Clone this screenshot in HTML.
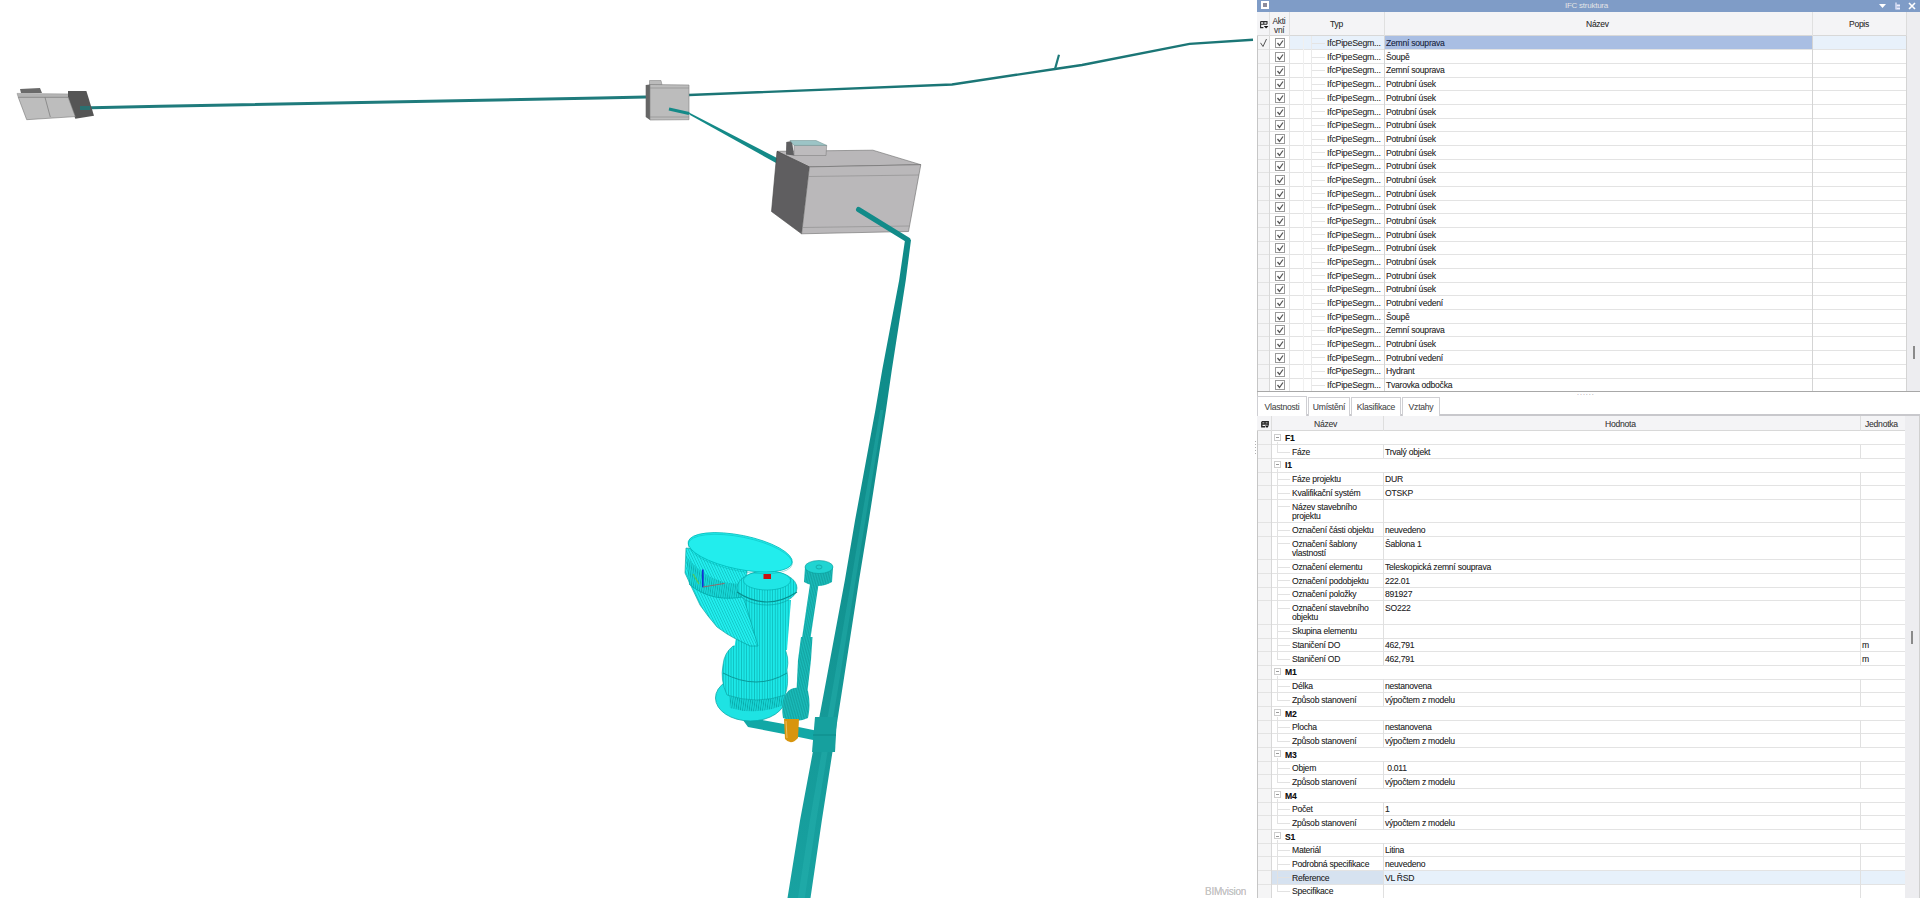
<!DOCTYPE html><html><head><meta charset="utf-8"><style>
*{margin:0;padding:0;box-sizing:border-box}
html,body{width:1920px;height:898px;overflow:hidden;background:#fff;font-family:"Liberation Sans",sans-serif;font-size:8.6px;letter-spacing:-0.25px;color:#2a2a2a}
.ab{position:absolute}
.t{position:absolute;white-space:nowrap;line-height:10px;text-shadow:0 0 .4px rgba(0,0,0,.3)}
.hl{position:absolute;height:1px;background:#e3e3e3}
.vl{position:absolute;width:1px;background:#e3e3e3}
.cb{position:absolute;width:10px;height:10px;border:1px solid #9a9a9a;background:#fff}
.cb svg{position:absolute;left:0;top:0}
</style></head><body>

<svg class="ab" style="left:0;top:0" width="1257" height="898" viewBox="0 0 1257 898">

<!-- long top pipe -->
<polyline points="80,108 160,106.3 600,98 646,97" fill="none" stroke="#1f7b7c" stroke-width="3"/>
<polyline points="689,95 952,84.5 1055,69 1082,65 1189.5,43.9 1253,39.7" fill="none" stroke="#1b7676" stroke-width="2.4"/>
<line x1="1055" y1="69" x2="1059" y2="54.7" stroke="#1d7a7a" stroke-width="2.2"/>
<!-- left box -->
<polygon points="20,89 40,88 42,93 21,93" fill="#6a6a6a"/>
<polygon points="17,93.4 68.6,93.9 68.6,97.4 18.3,97.4" fill="#b4b4b4" stroke="#8a8a8a" stroke-width=".5"/>
<polygon points="68,91 86.4,91 94,115.7 75.3,118.8 68,97" fill="#555"/>
<polygon points="18.3,97.4 68.2,97.4 75.3,116.6 26.7,119.7" fill="#bdbdbd" stroke="#777" stroke-width=".6"/>
<line x1="45" y1="97.4" x2="50.3" y2="117" stroke="#777" stroke-width=".7"/>
<line x1="80" y1="108" x2="90" y2="108" stroke="#2a7070" stroke-width="4"/>
<!-- small box -->
<polygon points="649.5,80.5 661,80.5 662,85 649.5,85" fill="#bbb" stroke="#777" stroke-width=".5"/>
<polygon points="645.7,85 650,84.5 650,120 645.7,117" fill="#666"/>
<polygon points="650,84.5 689,85 689,119.7 650,120" fill="#bcbcbc" stroke="#808080" stroke-width=".6"/>
<line x1="650" y1="88" x2="689" y2="88" stroke="#888" stroke-width=".6"/>
<line x1="650" y1="117" x2="689" y2="117" stroke="#888" stroke-width=".6"/>
<!-- diagonal pipe small box -> big box -->
<polyline points="669,109 689,113.5" fill="none" stroke="#148a88" stroke-width="3"/><polygon points="688,112 690,115 777,163.5 778,158.5" fill="#148a88"/>
<!-- big box -->
<polygon points="777,151.3 872.9,150.2 920.8,164.7 809.4,166.9" fill="#b9b7b9" stroke="#6a6a6a" stroke-width=".6"/>
<polygon points="777,151.3 809.4,166.9 801.6,233.8 771.5,211.5" fill="#5f5e60" stroke="#444" stroke-width=".6"/>
<polygon points="809.4,166.9 920.8,164.7 908.5,231.5 801.6,233.8" fill="#bab8ba" stroke="#6a6a6a" stroke-width=".6"/>
<line x1="808" y1="176.5" x2="919" y2="175" stroke="#8a8a8a" stroke-width=".6"/>
<line x1="802" y1="227.5" x2="909.5" y2="226" stroke="#8a8a8a" stroke-width=".6"/>
<polygon points="786.3,142 792,141 794,155.5 786,154.5" fill="#5e5e60"/>
<polygon points="794,145.4 826.7,145.4 826,155.5 794,155.5" fill="#bdbbbd" stroke="#777" stroke-width=".5"/>
<polygon points="790,140.5 816,140.5 826.7,145.4 794,145.4" fill="#9cc4c6" stroke="#6a8a8a" stroke-width=".5"/>
<!-- pipe in big box then down -->
<polyline points="858.5,209.5 908,240" fill="none" stroke="#128b89" stroke-width="5" stroke-linecap="round"/>
<defs><linearGradient id="pg" x1="0" y1="240" x2="0" y2="898" gradientUnits="userSpaceOnUse"><stop offset="0" stop-color="#0f8a88"/><stop offset=".45" stop-color="#11908e"/><stop offset="1" stop-color="#18a2a1"/></linearGradient></defs>
<polygon points="905.0,240 899.2,280 882.2,370 875.4,410 855.1,520 844.9,580 826.3,680 800.1,820 787.5,898 810.5,898 821.9,820 843.7,680 859.1,580 868.9,520 886.0,410 891.8,370 905.8,280 911.0,240" fill="url(#pg)"/>
<polygon points="880.2,410 861.3,520 851.3,580 834.1,680 809.9,820 797.9,898 804.8,898 816.4,820 839.4,680 855.6,580 865.4,520 883.4,410" fill="#2ab6b5" opacity=".35"/>


<defs>
<pattern id="vs" width="2.6" height="10" patternUnits="userSpaceOnUse"><rect width="2.6" height="10" fill="#1ce8e8"/><rect width="0.6" height="10" fill="#08aaaa"/></pattern>
<pattern id="vs2" width="2.2" height="10" patternUnits="userSpaceOnUse" patternTransform="rotate(8)"><rect width="2.2" height="10" fill="#16d4d4"/><rect width="0.6" height="10" fill="#079f9f"/></pattern>
<pattern id="vs3" width="2.4" height="10" patternUnits="userSpaceOnUse" patternTransform="rotate(-25)"><rect width="2.4" height="10" fill="#22eeee"/><rect width="0.5" height="10" fill="#09b0b0"/></pattern>
<pattern id="ps" width="1.6" height="10" patternUnits="userSpaceOnUse" patternTransform="rotate(10)"><rect width="1.6" height="10" fill="#1abcba"/><rect width="0.5" height="10" fill="#0e9896"/></pattern>
</defs>
<g>
<!-- connector -->
<polygon points="740,716 784,724 818,731 818,741 784,734 748,727" fill="#12a8a6"/>
<!-- coupling on main pipe -->
<polygon points="815,717 837,717 835,752 812,752" fill="#16a09e"/>
<line x1="813" y1="735" x2="836" y2="735" stroke="#0d8a88" stroke-width="1"/>
<!-- bottom disk -->
<ellipse cx="750.5" cy="698" rx="35" ry="23" fill="#1ee3e3" stroke="#0aa8a8" stroke-width=".8"/>
<!-- lower band -->
<path d="M728,684 L785,686 L784,705 Q757,716 730,708 Z" fill="url(#vs2)"/>
<!-- bulge -->
<path d="M733,646 L783,646 Q790,656 787,670 Q789,685 785,695 Q757,705 727,695 Q720,680 723,665 Q724,653 733,646 Z" fill="url(#vs)" stroke="#08a0a0" stroke-width=".6"/>
<path d="M723,673 Q757,691 787,673" fill="none" stroke="#0a9a9a" stroke-width="1"/>
<!-- column -->
<path d="M742,600 L791,600 L787,650 Q760,657 734,650 Z" fill="url(#vs)"/>
<!-- funnel -->
<path d="M686,548 L685,573 L691,586 L700,605 L708,616 L717,627 L727,634 L734,638 L750,646 L758,646 L745,602 L748,556 Z" fill="url(#vs3)" stroke="#099" stroke-width=".6"/>
<path d="M686,556 Q712,588 748,583 L748,596 Q712,604 689,584 Z" fill="url(#vs2)" opacity=".85"/>
<path d="M689,584 Q712,604 748,596" fill="none" stroke="#0aa" stroke-width=".8"/>
<!-- top ring -->
<ellipse cx="767" cy="588" rx="30" ry="17" fill="url(#vs)" stroke="#08a0a0" stroke-width=".6"/>
<ellipse cx="767" cy="580.5" rx="23.5" ry="9.5" fill="#20e6e6" stroke="#0aa" stroke-width=".6"/>
<path d="M737,592 Q767,612 797,592" fill="none" stroke="#078f8f" stroke-width="1.2"/>
<!-- lid -->
<ellipse cx="740.2" cy="552.3" rx="53" ry="17" transform="rotate(11.4 740.2 552.3)" fill="#22eded" stroke="#0bb" stroke-width=".8"/>
<ellipse cx="740.2" cy="554" rx="53" ry="17" transform="rotate(11.4 740.2 554)" fill="none" stroke="#0aa" stroke-width=".6" opacity=".6"/>
<rect x="763.5" y="574" width="7.5" height="5" fill="#c81010"/>
<line x1="702.8" y1="569.5" x2="702.8" y2="587.3" stroke="#1030d8" stroke-width="1.7"/>
<line x1="693" y1="574" x2="699" y2="584" stroke="#5c5" stroke-width="1.2"/>
<line x1="703" y1="587" x2="724.6" y2="583.4" stroke="#a06060" stroke-width=".9"/>
<!-- small pipe -->
<polygon points="810,584 818.6,584 810.5,638 802,638" fill="url(#ps)"/>
<path d="M801,637 L812.5,637 L811,660 L807.5,691 L796.5,691 L798,660 Z" fill="url(#ps)"/>
<path d="M794,688 Q803,686 808,691 Q811,705 808,718 Q796,724 783,718 Q781,705 784,697 Q788,689 794,688 Z" fill="url(#ps)"/>
<path d="M805,567 L833,567 L832,582 Q818,590 804,582 Z" fill="url(#ps)"/>
<ellipse cx="819" cy="567" rx="14" ry="6.5" fill="#20d4d2" stroke="#0a9a98" stroke-width=".6"/>
<ellipse cx="819" cy="567" rx="3" ry="2" fill="none" stroke="#0a8a88" stroke-width=".5"/>
<!-- orange nozzle -->
<path d="M784,719 L799,719 L798,738 Q791,746 785,739 Z" fill="#d8950e"/>
<path d="M786,721 L787,738" stroke="#f0c060" stroke-width="1"/>
</g>

</svg>
<div class="t" style="left:1205px;top:887px;color:#c8c8c8;font-size:10px">BIMvision</div>
<div class="ab" style="left:1257px;top:0;width:663px;height:898px;background:#fff;border-left:1px solid #c6c6c6"></div>
<div class="ab" style="left:1257px;top:0;width:663px;height:12px;background:#7f9cc7"></div>
<div class="ab" style="left:1261px;top:1px;width:8px;height:8px;background:#fff"><div class="ab" style="left:2px;top:2px;width:4px;height:4px;background:#8c8c9c"></div></div>
<div class="t" style="left:1565px;top:0px;color:#eef2f8;font-size:8px;line-height:11px">IFC struktura</div>
<svg class="ab" style="left:1879px;top:2px" width="40" height="9"><polygon points="0,2 7,2 3.5,6" fill="#fff"/><path d="M17,0.5 v7" stroke="#eef" stroke-width="1.2" fill="none"/><rect x="17.5" y="2.5" width="3.5" height="2" fill="#eef"/><rect x="17.5" y="5.5" width="3.5" height="2" fill="#eef"/><path d="M30,1 l6,6 M36,1 l-6,6" stroke="#fff" stroke-width="1.6"/></svg>
<div class="ab" style="left:1257px;top:12px;width:650px;height:24px;background:#f4f4f6;border-bottom:1px solid #d8d8d8"></div>
<div class="vl" style="left:1269px;top:12px;height:24px;background:#e0e0e0"></div>
<div class="vl" style="left:1289px;top:12px;height:24px;background:#e0e0e0"></div>
<div class="vl" style="left:1384px;top:12px;height:24px;background:#e0e0e0"></div>
<div class="vl" style="left:1812px;top:12px;height:24px;background:#e0e0e0"></div>
<div class="vl" style="left:1906px;top:12px;height:24px;background:#e0e0e0"></div>
<div class="t" style="left:1272.5px;top:15.5px;color:#444;font-size:8.3px">Akti</div><div class="t" style="left:1274px;top:25px;color:#444;font-size:8.3px">vní</div>
<div class="t" style="left:1330px;top:19px;color:#333;font-size:8.5px">Typ</div>
<div class="t" style="left:1586px;top:19px;color:#333;font-size:8.5px">Název</div>
<div class="t" style="left:1849px;top:19px;color:#333;font-size:8.5px">Popis</div>
<svg class="ab" style="left:1260px;top:21px" width="9" height="8"><path d="M0.6,0.6h6.4v2.7 M0.6,0.6v6h2.8 M0.6,3.2h6.4 M3.8,0.6v2.6" stroke="#2a2a2a" fill="none" stroke-width="1.1"/><polygon points="3.8,5 8.4,5 6.1,7.6" fill="#111"/></svg>
<div class="ab" style="left:1906px;top:12px;width:14px;height:380px;background:#ededf0;border-left:1px solid #dcdcdc"></div>
<div class="ab" style="left:1913px;top:346px;width:2px;height:13px;background:#8a8a8a"></div>
<div class="ab" style="left:1258px;top:36px;width:11px;height:356px;background:#f5f5f6"></div>
<div class="ab" style="left:1289px;top:36.0px;width:95px;height:13.68px;background:#e8f1fb"></div>
<div class="ab" style="left:1384px;top:36.0px;width:428px;height:13.68px;background:#a9bee3"></div>
<div class="ab" style="left:1812px;top:36.0px;width:94px;height:13.68px;background:#e8f1fb"></div>
<div class="hl" style="left:1258px;top:49.18px;width:648px"></div>
<div class="cb" style="left:1275px;top:38.20px"><svg width="8" height="8"><path d="M1.5,4 L3.5,6.5 L7,1.5" stroke="#555" stroke-width="1.3" fill="none"/></svg></div>
<div class="hl" style="left:1312px;top:42.84px;width:13px;background:#e4e4e4"></div>
<div class="t" style="left:1327px;top:38.10px;font-size:8.8px;color:#303030">IfcPipeSegm...</div>
<div class="t" style="left:1386px;top:38.10px;color:#1c2a48">Zemní souprava</div>
<div class="hl" style="left:1258px;top:62.86px;width:648px"></div>
<div class="cb" style="left:1275px;top:51.88px"><svg width="8" height="8"><path d="M1.5,4 L3.5,6.5 L7,1.5" stroke="#555" stroke-width="1.3" fill="none"/></svg></div>
<div class="hl" style="left:1312px;top:56.52px;width:13px;background:#e4e4e4"></div>
<div class="t" style="left:1327px;top:51.78px;font-size:8.8px;color:#303030">IfcPipeSegm...</div>
<div class="t" style="left:1386px;top:51.78px;color:#2c2c2c">Šoupě</div>
<div class="hl" style="left:1258px;top:76.54px;width:648px"></div>
<div class="cb" style="left:1275px;top:65.56px"><svg width="8" height="8"><path d="M1.5,4 L3.5,6.5 L7,1.5" stroke="#555" stroke-width="1.3" fill="none"/></svg></div>
<div class="hl" style="left:1312px;top:70.20px;width:13px;background:#e4e4e4"></div>
<div class="t" style="left:1327px;top:65.46px;font-size:8.8px;color:#303030">IfcPipeSegm...</div>
<div class="t" style="left:1386px;top:65.46px;color:#2c2c2c">Zemní souprava</div>
<div class="hl" style="left:1258px;top:90.22px;width:648px"></div>
<div class="cb" style="left:1275px;top:79.24px"><svg width="8" height="8"><path d="M1.5,4 L3.5,6.5 L7,1.5" stroke="#555" stroke-width="1.3" fill="none"/></svg></div>
<div class="hl" style="left:1312px;top:83.88px;width:13px;background:#e4e4e4"></div>
<div class="t" style="left:1327px;top:79.14px;font-size:8.8px;color:#303030">IfcPipeSegm...</div>
<div class="t" style="left:1386px;top:79.14px;color:#2c2c2c">Potrubní úsek</div>
<div class="hl" style="left:1258px;top:103.90px;width:648px"></div>
<div class="cb" style="left:1275px;top:92.92px"><svg width="8" height="8"><path d="M1.5,4 L3.5,6.5 L7,1.5" stroke="#555" stroke-width="1.3" fill="none"/></svg></div>
<div class="hl" style="left:1312px;top:97.56px;width:13px;background:#e4e4e4"></div>
<div class="t" style="left:1327px;top:92.82px;font-size:8.8px;color:#303030">IfcPipeSegm...</div>
<div class="t" style="left:1386px;top:92.82px;color:#2c2c2c">Potrubní úsek</div>
<div class="hl" style="left:1258px;top:117.58px;width:648px"></div>
<div class="cb" style="left:1275px;top:106.60px"><svg width="8" height="8"><path d="M1.5,4 L3.5,6.5 L7,1.5" stroke="#555" stroke-width="1.3" fill="none"/></svg></div>
<div class="hl" style="left:1312px;top:111.24px;width:13px;background:#e4e4e4"></div>
<div class="t" style="left:1327px;top:106.50px;font-size:8.8px;color:#303030">IfcPipeSegm...</div>
<div class="t" style="left:1386px;top:106.50px;color:#2c2c2c">Potrubní úsek</div>
<div class="hl" style="left:1258px;top:131.26px;width:648px"></div>
<div class="cb" style="left:1275px;top:120.28px"><svg width="8" height="8"><path d="M1.5,4 L3.5,6.5 L7,1.5" stroke="#555" stroke-width="1.3" fill="none"/></svg></div>
<div class="hl" style="left:1312px;top:124.92px;width:13px;background:#e4e4e4"></div>
<div class="t" style="left:1327px;top:120.18px;font-size:8.8px;color:#303030">IfcPipeSegm...</div>
<div class="t" style="left:1386px;top:120.18px;color:#2c2c2c">Potrubní úsek</div>
<div class="hl" style="left:1258px;top:144.94px;width:648px"></div>
<div class="cb" style="left:1275px;top:133.96px"><svg width="8" height="8"><path d="M1.5,4 L3.5,6.5 L7,1.5" stroke="#555" stroke-width="1.3" fill="none"/></svg></div>
<div class="hl" style="left:1312px;top:138.60px;width:13px;background:#e4e4e4"></div>
<div class="t" style="left:1327px;top:133.86px;font-size:8.8px;color:#303030">IfcPipeSegm...</div>
<div class="t" style="left:1386px;top:133.86px;color:#2c2c2c">Potrubní úsek</div>
<div class="hl" style="left:1258px;top:158.62px;width:648px"></div>
<div class="cb" style="left:1275px;top:147.64px"><svg width="8" height="8"><path d="M1.5,4 L3.5,6.5 L7,1.5" stroke="#555" stroke-width="1.3" fill="none"/></svg></div>
<div class="hl" style="left:1312px;top:152.28px;width:13px;background:#e4e4e4"></div>
<div class="t" style="left:1327px;top:147.54px;font-size:8.8px;color:#303030">IfcPipeSegm...</div>
<div class="t" style="left:1386px;top:147.54px;color:#2c2c2c">Potrubní úsek</div>
<div class="hl" style="left:1258px;top:172.30px;width:648px"></div>
<div class="cb" style="left:1275px;top:161.32px"><svg width="8" height="8"><path d="M1.5,4 L3.5,6.5 L7,1.5" stroke="#555" stroke-width="1.3" fill="none"/></svg></div>
<div class="hl" style="left:1312px;top:165.96px;width:13px;background:#e4e4e4"></div>
<div class="t" style="left:1327px;top:161.22px;font-size:8.8px;color:#303030">IfcPipeSegm...</div>
<div class="t" style="left:1386px;top:161.22px;color:#2c2c2c">Potrubní úsek</div>
<div class="hl" style="left:1258px;top:185.98px;width:648px"></div>
<div class="cb" style="left:1275px;top:175.00px"><svg width="8" height="8"><path d="M1.5,4 L3.5,6.5 L7,1.5" stroke="#555" stroke-width="1.3" fill="none"/></svg></div>
<div class="hl" style="left:1312px;top:179.64px;width:13px;background:#e4e4e4"></div>
<div class="t" style="left:1327px;top:174.90px;font-size:8.8px;color:#303030">IfcPipeSegm...</div>
<div class="t" style="left:1386px;top:174.90px;color:#2c2c2c">Potrubní úsek</div>
<div class="hl" style="left:1258px;top:199.66px;width:648px"></div>
<div class="cb" style="left:1275px;top:188.68px"><svg width="8" height="8"><path d="M1.5,4 L3.5,6.5 L7,1.5" stroke="#555" stroke-width="1.3" fill="none"/></svg></div>
<div class="hl" style="left:1312px;top:193.32px;width:13px;background:#e4e4e4"></div>
<div class="t" style="left:1327px;top:188.58px;font-size:8.8px;color:#303030">IfcPipeSegm...</div>
<div class="t" style="left:1386px;top:188.58px;color:#2c2c2c">Potrubní úsek</div>
<div class="hl" style="left:1258px;top:213.34px;width:648px"></div>
<div class="cb" style="left:1275px;top:202.36px"><svg width="8" height="8"><path d="M1.5,4 L3.5,6.5 L7,1.5" stroke="#555" stroke-width="1.3" fill="none"/></svg></div>
<div class="hl" style="left:1312px;top:207.00px;width:13px;background:#e4e4e4"></div>
<div class="t" style="left:1327px;top:202.26px;font-size:8.8px;color:#303030">IfcPipeSegm...</div>
<div class="t" style="left:1386px;top:202.26px;color:#2c2c2c">Potrubní úsek</div>
<div class="hl" style="left:1258px;top:227.02px;width:648px"></div>
<div class="cb" style="left:1275px;top:216.04px"><svg width="8" height="8"><path d="M1.5,4 L3.5,6.5 L7,1.5" stroke="#555" stroke-width="1.3" fill="none"/></svg></div>
<div class="hl" style="left:1312px;top:220.68px;width:13px;background:#e4e4e4"></div>
<div class="t" style="left:1327px;top:215.94px;font-size:8.8px;color:#303030">IfcPipeSegm...</div>
<div class="t" style="left:1386px;top:215.94px;color:#2c2c2c">Potrubní úsek</div>
<div class="hl" style="left:1258px;top:240.70px;width:648px"></div>
<div class="cb" style="left:1275px;top:229.72px"><svg width="8" height="8"><path d="M1.5,4 L3.5,6.5 L7,1.5" stroke="#555" stroke-width="1.3" fill="none"/></svg></div>
<div class="hl" style="left:1312px;top:234.36px;width:13px;background:#e4e4e4"></div>
<div class="t" style="left:1327px;top:229.62px;font-size:8.8px;color:#303030">IfcPipeSegm...</div>
<div class="t" style="left:1386px;top:229.62px;color:#2c2c2c">Potrubní úsek</div>
<div class="hl" style="left:1258px;top:254.38px;width:648px"></div>
<div class="cb" style="left:1275px;top:243.40px"><svg width="8" height="8"><path d="M1.5,4 L3.5,6.5 L7,1.5" stroke="#555" stroke-width="1.3" fill="none"/></svg></div>
<div class="hl" style="left:1312px;top:248.04px;width:13px;background:#e4e4e4"></div>
<div class="t" style="left:1327px;top:243.30px;font-size:8.8px;color:#303030">IfcPipeSegm...</div>
<div class="t" style="left:1386px;top:243.30px;color:#2c2c2c">Potrubní úsek</div>
<div class="hl" style="left:1258px;top:268.06px;width:648px"></div>
<div class="cb" style="left:1275px;top:257.08px"><svg width="8" height="8"><path d="M1.5,4 L3.5,6.5 L7,1.5" stroke="#555" stroke-width="1.3" fill="none"/></svg></div>
<div class="hl" style="left:1312px;top:261.72px;width:13px;background:#e4e4e4"></div>
<div class="t" style="left:1327px;top:256.98px;font-size:8.8px;color:#303030">IfcPipeSegm...</div>
<div class="t" style="left:1386px;top:256.98px;color:#2c2c2c">Potrubní úsek</div>
<div class="hl" style="left:1258px;top:281.74px;width:648px"></div>
<div class="cb" style="left:1275px;top:270.76px"><svg width="8" height="8"><path d="M1.5,4 L3.5,6.5 L7,1.5" stroke="#555" stroke-width="1.3" fill="none"/></svg></div>
<div class="hl" style="left:1312px;top:275.40px;width:13px;background:#e4e4e4"></div>
<div class="t" style="left:1327px;top:270.66px;font-size:8.8px;color:#303030">IfcPipeSegm...</div>
<div class="t" style="left:1386px;top:270.66px;color:#2c2c2c">Potrubní úsek</div>
<div class="hl" style="left:1258px;top:295.42px;width:648px"></div>
<div class="cb" style="left:1275px;top:284.44px"><svg width="8" height="8"><path d="M1.5,4 L3.5,6.5 L7,1.5" stroke="#555" stroke-width="1.3" fill="none"/></svg></div>
<div class="hl" style="left:1312px;top:289.08px;width:13px;background:#e4e4e4"></div>
<div class="t" style="left:1327px;top:284.34px;font-size:8.8px;color:#303030">IfcPipeSegm...</div>
<div class="t" style="left:1386px;top:284.34px;color:#2c2c2c">Potrubní úsek</div>
<div class="hl" style="left:1258px;top:309.10px;width:648px"></div>
<div class="cb" style="left:1275px;top:298.12px"><svg width="8" height="8"><path d="M1.5,4 L3.5,6.5 L7,1.5" stroke="#555" stroke-width="1.3" fill="none"/></svg></div>
<div class="hl" style="left:1312px;top:302.76px;width:13px;background:#e4e4e4"></div>
<div class="t" style="left:1327px;top:298.02px;font-size:8.8px;color:#303030">IfcPipeSegm...</div>
<div class="t" style="left:1386px;top:298.02px;color:#2c2c2c">Potrubní vedení</div>
<div class="hl" style="left:1258px;top:322.78px;width:648px"></div>
<div class="cb" style="left:1275px;top:311.80px"><svg width="8" height="8"><path d="M1.5,4 L3.5,6.5 L7,1.5" stroke="#555" stroke-width="1.3" fill="none"/></svg></div>
<div class="hl" style="left:1312px;top:316.44px;width:13px;background:#e4e4e4"></div>
<div class="t" style="left:1327px;top:311.70px;font-size:8.8px;color:#303030">IfcPipeSegm...</div>
<div class="t" style="left:1386px;top:311.70px;color:#2c2c2c">Šoupě</div>
<div class="hl" style="left:1258px;top:336.46px;width:648px"></div>
<div class="cb" style="left:1275px;top:325.48px"><svg width="8" height="8"><path d="M1.5,4 L3.5,6.5 L7,1.5" stroke="#555" stroke-width="1.3" fill="none"/></svg></div>
<div class="hl" style="left:1312px;top:330.12px;width:13px;background:#e4e4e4"></div>
<div class="t" style="left:1327px;top:325.38px;font-size:8.8px;color:#303030">IfcPipeSegm...</div>
<div class="t" style="left:1386px;top:325.38px;color:#2c2c2c">Zemní souprava</div>
<div class="hl" style="left:1258px;top:350.14px;width:648px"></div>
<div class="cb" style="left:1275px;top:339.16px"><svg width="8" height="8"><path d="M1.5,4 L3.5,6.5 L7,1.5" stroke="#555" stroke-width="1.3" fill="none"/></svg></div>
<div class="hl" style="left:1312px;top:343.80px;width:13px;background:#e4e4e4"></div>
<div class="t" style="left:1327px;top:339.06px;font-size:8.8px;color:#303030">IfcPipeSegm...</div>
<div class="t" style="left:1386px;top:339.06px;color:#2c2c2c">Potrubní úsek</div>
<div class="hl" style="left:1258px;top:363.82px;width:648px"></div>
<div class="cb" style="left:1275px;top:352.84px"><svg width="8" height="8"><path d="M1.5,4 L3.5,6.5 L7,1.5" stroke="#555" stroke-width="1.3" fill="none"/></svg></div>
<div class="hl" style="left:1312px;top:357.48px;width:13px;background:#e4e4e4"></div>
<div class="t" style="left:1327px;top:352.74px;font-size:8.8px;color:#303030">IfcPipeSegm...</div>
<div class="t" style="left:1386px;top:352.74px;color:#2c2c2c">Potrubní vedení</div>
<div class="hl" style="left:1258px;top:377.50px;width:648px"></div>
<div class="cb" style="left:1275px;top:366.52px"><svg width="8" height="8"><path d="M1.5,4 L3.5,6.5 L7,1.5" stroke="#555" stroke-width="1.3" fill="none"/></svg></div>
<div class="hl" style="left:1312px;top:371.16px;width:13px;background:#e4e4e4"></div>
<div class="t" style="left:1327px;top:366.42px;font-size:8.8px;color:#303030">IfcPipeSegm...</div>
<div class="t" style="left:1386px;top:366.42px;color:#2c2c2c">Hydrant</div>
<div class="hl" style="left:1258px;top:391.18px;width:648px"></div>
<div class="cb" style="left:1275px;top:380.20px"><svg width="8" height="8"><path d="M1.5,4 L3.5,6.5 L7,1.5" stroke="#555" stroke-width="1.3" fill="none"/></svg></div>
<div class="hl" style="left:1312px;top:384.84px;width:13px;background:#e4e4e4"></div>
<div class="t" style="left:1327px;top:380.10px;font-size:8.8px;color:#303030">IfcPipeSegm...</div>
<div class="t" style="left:1386px;top:380.10px;color:#2c2c2c">Tvarovka odbočka</div>
<div class="vl" style="left:1269px;top:36px;height:356px;background:#d8d8d8"></div>
<div class="vl" style="left:1289px;top:36px;height:356px;background:#e2e2e2"></div>
<div class="vl" style="left:1303px;top:36px;height:356px;background:#f0f0f0"></div>
<div class="vl" style="left:1311px;top:36px;height:356px;background:#eaeaea"></div>
<div class="vl" style="left:1384px;top:36px;height:356px;background:#d4d4d4"></div>
<div class="vl" style="left:1812px;top:36px;height:356px;background:#d4d4d4"></div>
<div class="vl" style="left:1906px;top:36px;height:356px;background:#d4d4d4"></div>
<svg class="ab" style="left:1260px;top:38px" width="8" height="10"><path d="M0.5,4.8 L3,8.5 L6.5,1" stroke="#555" stroke-width="1" fill="none"/></svg>
<div class="hl" style="left:1257px;top:391px;width:663px;background:#a8a8a8"></div>
<div class="t" style="left:1577px;top:388px;color:#bbb;font-size:7px;letter-spacing:1px">......</div>
<div class="ab" style="left:1257px;top:414px;width:663px;height:2px;background:#c8c8cc"></div>
<div class="ab" style="left:1257px;top:396px;width:50px;height:20px;background:#fff;border:1px solid #cfcfd3;border-bottom:none"></div>
<div class="t" style="left:1257px;width:50px;text-align:center;top:401.7px;color:#555">Vlastnosti</div>
<div class="ab" style="left:1308px;top:397px;width:42px;height:19px;background:#fff;border:1px solid #cfcfd3;border-bottom:none"></div>
<div class="t" style="left:1308px;width:42px;text-align:center;top:401.7px;color:#555">Umístění</div>
<div class="ab" style="left:1351px;top:397px;width:50px;height:19px;background:#fff;border:1px solid #cfcfd3;border-bottom:none"></div>
<div class="t" style="left:1351px;width:50px;text-align:center;top:401.7px;color:#555">Klasifikace</div>
<div class="ab" style="left:1402px;top:397px;width:38px;height:19px;background:#fff;border:1px solid #cfcfd3;border-bottom:none"></div>
<div class="t" style="left:1402px;width:38px;text-align:center;top:401.7px;color:#555">Vztahy</div>
<div class="ab" style="left:1257px;top:416px;width:648px;height:15px;background:#f4f4f6;border-bottom:1px solid #d8d8d8"></div>
<div class="vl" style="left:1271px;top:416px;height:15px;background:#dedede"></div>
<div class="vl" style="left:1383px;top:416px;height:15px;background:#dedede"></div>
<div class="vl" style="left:1860px;top:416px;height:15px;background:#dedede"></div>
<div class="vl" style="left:1905px;top:416px;height:15px;background:#dedede"></div>
<svg class="ab" style="left:1261px;top:421px" width="9" height="8"><path d="M0.8,0.8h6.4v3.5 M0.8,0.8v5h3.4 M0.8,3h6.4 M4,0.8v2.2" stroke="#262626" fill="none" stroke-width="1.4"/><polygon points="4,4.5 8,4.5 6,7" fill="#111"/></svg>
<div class="t" style="left:1314px;top:419px;color:#444">Název</div>
<div class="t" style="left:1605px;top:419px;color:#444">Hodnota</div>
<div class="t" style="left:1865px;top:419px;color:#444">Jednotka</div>
<div class="ab" style="left:1905px;top:416px;width:15px;height:482px;background:#ededf0;border-right:1px solid #d0d0d0"></div>
<div class="ab" style="left:1911px;top:631px;width:2px;height:13px;background:#8a8a8a"></div>
<div class="ab" style="left:1258px;top:431px;width:13px;height:467px;background:#f5f5f6"></div>
<div class="hl" style="left:1258px;top:444.18px;width:647px"></div>
<div class="ab" style="left:1273.5px;top:433.80px;width:7px;height:7px;border:1px solid #cdcdcd;background:#fff"><div class="ab" style="left:1px;top:2.2px;width:3.5px;height:1px;background:#9a9a9a"></div></div>
<div class="t" style="left:1285px;top:433.10px;font-weight:bold;color:#111">F1</div>
<div class="hl" style="left:1258px;top:457.86px;width:647px"></div>
<div class="hl" style="left:1277.3px;top:451.52px;width:13px;background:#e2e2e2"></div>
<div class="vl" style="left:1277.3px;top:441.50px;height:10.02px;background:#e2e2e2"></div>
<div class="t" style="left:1292px;top:446.78px">Fáze</div>
<div class="t" style="left:1385px;top:446.78px">Trvalý objekt</div>
<div class="vl" style="left:1383px;top:444.68px;height:13.68px;background:#e0e0e0"></div>
<div class="vl" style="left:1860px;top:444.68px;height:13.68px;background:#e0e0e0"></div>
<div class="hl" style="left:1258px;top:471.54px;width:647px"></div>
<div class="ab" style="left:1273.5px;top:461.16px;width:7px;height:7px;border:1px solid #cdcdcd;background:#fff"><div class="ab" style="left:1px;top:2.2px;width:3.5px;height:1px;background:#9a9a9a"></div></div>
<div class="t" style="left:1285px;top:460.46px;font-weight:bold;color:#111">I1</div>
<div class="hl" style="left:1258px;top:485.22px;width:647px"></div>
<div class="hl" style="left:1277.3px;top:478.88px;width:13px;background:#e2e2e2"></div>
<div class="vl" style="left:1277.3px;top:468.86px;height:10.02px;background:#e2e2e2"></div>
<div class="t" style="left:1292px;top:474.14px">Fáze projektu</div>
<div class="t" style="left:1385px;top:474.14px">DUR</div>
<div class="vl" style="left:1383px;top:472.04px;height:13.68px;background:#e0e0e0"></div>
<div class="vl" style="left:1860px;top:472.04px;height:13.68px;background:#e0e0e0"></div>
<div class="hl" style="left:1258px;top:498.90px;width:647px"></div>
<div class="hl" style="left:1277.3px;top:492.56px;width:13px;background:#e2e2e2"></div>
<div class="vl" style="left:1277.3px;top:468.86px;height:23.70px;background:#e2e2e2"></div>
<div class="t" style="left:1292px;top:487.82px">Kvalifikační systém</div>
<div class="t" style="left:1385px;top:487.82px">OTSKP</div>
<div class="vl" style="left:1383px;top:485.72px;height:13.68px;background:#e0e0e0"></div>
<div class="vl" style="left:1860px;top:485.72px;height:13.68px;background:#e0e0e0"></div>
<div class="hl" style="left:1258px;top:522.30px;width:647px"></div>
<div class="hl" style="left:1277.3px;top:506.24px;width:13px;background:#e2e2e2"></div>
<div class="vl" style="left:1277.3px;top:468.86px;height:37.38px;background:#e2e2e2"></div>
<div class="t" style="left:1292px;top:501.50px">Název stavebního</div><div class="t" style="left:1292px;top:510.70px">projektu</div>
<div class="t" style="left:1385px;top:501.50px"></div>
<div class="vl" style="left:1383px;top:499.40000000000003px;height:23.4px;background:#e0e0e0"></div>
<div class="vl" style="left:1860px;top:499.40000000000003px;height:23.4px;background:#e0e0e0"></div>
<div class="hl" style="left:1258px;top:535.98px;width:647px"></div>
<div class="hl" style="left:1277.3px;top:529.64px;width:13px;background:#e2e2e2"></div>
<div class="vl" style="left:1277.3px;top:468.86px;height:60.78px;background:#e2e2e2"></div>
<div class="t" style="left:1292px;top:524.90px">Označení části objektu</div>
<div class="t" style="left:1385px;top:524.90px">neuvedeno</div>
<div class="vl" style="left:1383px;top:522.8000000000001px;height:13.68px;background:#e0e0e0"></div>
<div class="vl" style="left:1860px;top:522.8000000000001px;height:13.68px;background:#e0e0e0"></div>
<div class="hl" style="left:1258px;top:559.38px;width:647px"></div>
<div class="hl" style="left:1277.3px;top:543.32px;width:13px;background:#e2e2e2"></div>
<div class="vl" style="left:1277.3px;top:468.86px;height:74.46px;background:#e2e2e2"></div>
<div class="t" style="left:1292px;top:538.58px">Označení šablony</div><div class="t" style="left:1292px;top:547.78px">vlastností</div>
<div class="t" style="left:1385px;top:538.58px">Šablona 1</div>
<div class="vl" style="left:1383px;top:536.48px;height:23.4px;background:#e0e0e0"></div>
<div class="vl" style="left:1860px;top:536.48px;height:23.4px;background:#e0e0e0"></div>
<div class="hl" style="left:1258px;top:573.06px;width:647px"></div>
<div class="hl" style="left:1277.3px;top:566.72px;width:13px;background:#e2e2e2"></div>
<div class="vl" style="left:1277.3px;top:468.86px;height:97.86px;background:#e2e2e2"></div>
<div class="t" style="left:1292px;top:561.98px">Označení elementu</div>
<div class="t" style="left:1385px;top:561.98px">Teleskopická zemní souprava</div>
<div class="vl" style="left:1383px;top:559.88px;height:13.68px;background:#e0e0e0"></div>
<div class="vl" style="left:1860px;top:559.88px;height:13.68px;background:#e0e0e0"></div>
<div class="hl" style="left:1258px;top:586.74px;width:647px"></div>
<div class="hl" style="left:1277.3px;top:580.40px;width:13px;background:#e2e2e2"></div>
<div class="vl" style="left:1277.3px;top:468.86px;height:111.54px;background:#e2e2e2"></div>
<div class="t" style="left:1292px;top:575.66px">Označení podobjektu</div>
<div class="t" style="left:1385px;top:575.66px">222.01</div>
<div class="vl" style="left:1383px;top:573.56px;height:13.68px;background:#e0e0e0"></div>
<div class="vl" style="left:1860px;top:573.56px;height:13.68px;background:#e0e0e0"></div>
<div class="hl" style="left:1258px;top:600.42px;width:647px"></div>
<div class="hl" style="left:1277.3px;top:594.08px;width:13px;background:#e2e2e2"></div>
<div class="vl" style="left:1277.3px;top:468.86px;height:125.22px;background:#e2e2e2"></div>
<div class="t" style="left:1292px;top:589.34px">Označení položky</div>
<div class="t" style="left:1385px;top:589.34px">891927</div>
<div class="vl" style="left:1383px;top:587.2399999999999px;height:13.68px;background:#e0e0e0"></div>
<div class="vl" style="left:1860px;top:587.2399999999999px;height:13.68px;background:#e0e0e0"></div>
<div class="hl" style="left:1258px;top:623.82px;width:647px"></div>
<div class="hl" style="left:1277.3px;top:607.76px;width:13px;background:#e2e2e2"></div>
<div class="vl" style="left:1277.3px;top:468.86px;height:138.90px;background:#e2e2e2"></div>
<div class="t" style="left:1292px;top:603.02px">Označení stavebního</div><div class="t" style="left:1292px;top:612.22px">objektu</div>
<div class="t" style="left:1385px;top:603.02px">SO222</div>
<div class="vl" style="left:1383px;top:600.9199999999998px;height:23.4px;background:#e0e0e0"></div>
<div class="vl" style="left:1860px;top:600.9199999999998px;height:23.4px;background:#e0e0e0"></div>
<div class="hl" style="left:1258px;top:637.50px;width:647px"></div>
<div class="hl" style="left:1277.3px;top:631.16px;width:13px;background:#e2e2e2"></div>
<div class="vl" style="left:1277.3px;top:468.86px;height:162.30px;background:#e2e2e2"></div>
<div class="t" style="left:1292px;top:626.42px">Skupina elementu</div>
<div class="t" style="left:1385px;top:626.42px"></div>
<div class="vl" style="left:1383px;top:624.3199999999998px;height:13.68px;background:#e0e0e0"></div>
<div class="vl" style="left:1860px;top:624.3199999999998px;height:13.68px;background:#e0e0e0"></div>
<div class="hl" style="left:1258px;top:651.18px;width:647px"></div>
<div class="hl" style="left:1277.3px;top:644.84px;width:13px;background:#e2e2e2"></div>
<div class="vl" style="left:1277.3px;top:468.86px;height:175.98px;background:#e2e2e2"></div>
<div class="t" style="left:1292px;top:640.10px">Staničení DO</div>
<div class="t" style="left:1385px;top:640.10px">462,791</div>
<div class="t" style="left:1862px;top:640.10px">m</div>
<div class="vl" style="left:1383px;top:637.9999999999998px;height:13.68px;background:#e0e0e0"></div>
<div class="vl" style="left:1860px;top:637.9999999999998px;height:13.68px;background:#e0e0e0"></div>
<div class="hl" style="left:1258px;top:664.86px;width:647px"></div>
<div class="hl" style="left:1277.3px;top:658.52px;width:13px;background:#e2e2e2"></div>
<div class="vl" style="left:1277.3px;top:468.86px;height:189.66px;background:#e2e2e2"></div>
<div class="t" style="left:1292px;top:653.78px">Staničení OD</div>
<div class="t" style="left:1385px;top:653.78px">462,791</div>
<div class="t" style="left:1862px;top:653.78px">m</div>
<div class="vl" style="left:1383px;top:651.6799999999997px;height:13.68px;background:#e0e0e0"></div>
<div class="vl" style="left:1860px;top:651.6799999999997px;height:13.68px;background:#e0e0e0"></div>
<div class="hl" style="left:1258px;top:678.54px;width:647px"></div>
<div class="ab" style="left:1273.5px;top:668.16px;width:7px;height:7px;border:1px solid #cdcdcd;background:#fff"><div class="ab" style="left:1px;top:2.2px;width:3.5px;height:1px;background:#9a9a9a"></div></div>
<div class="t" style="left:1285px;top:667.46px;font-weight:bold;color:#111">M1</div>
<div class="hl" style="left:1258px;top:692.22px;width:647px"></div>
<div class="hl" style="left:1277.3px;top:685.88px;width:13px;background:#e2e2e2"></div>
<div class="vl" style="left:1277.3px;top:675.86px;height:10.02px;background:#e2e2e2"></div>
<div class="t" style="left:1292px;top:681.14px">Délka</div>
<div class="t" style="left:1385px;top:681.14px">nestanovena</div>
<div class="vl" style="left:1383px;top:679.0399999999996px;height:13.68px;background:#e0e0e0"></div>
<div class="vl" style="left:1860px;top:679.0399999999996px;height:13.68px;background:#e0e0e0"></div>
<div class="hl" style="left:1258px;top:705.90px;width:647px"></div>
<div class="hl" style="left:1277.3px;top:699.56px;width:13px;background:#e2e2e2"></div>
<div class="vl" style="left:1277.3px;top:675.86px;height:23.70px;background:#e2e2e2"></div>
<div class="t" style="left:1292px;top:694.82px">Způsob stanovení</div>
<div class="t" style="left:1385px;top:694.82px">výpočtem z modelu</div>
<div class="vl" style="left:1383px;top:692.7199999999996px;height:13.68px;background:#e0e0e0"></div>
<div class="vl" style="left:1860px;top:692.7199999999996px;height:13.68px;background:#e0e0e0"></div>
<div class="hl" style="left:1258px;top:719.58px;width:647px"></div>
<div class="ab" style="left:1273.5px;top:709.20px;width:7px;height:7px;border:1px solid #cdcdcd;background:#fff"><div class="ab" style="left:1px;top:2.2px;width:3.5px;height:1px;background:#9a9a9a"></div></div>
<div class="t" style="left:1285px;top:708.50px;font-weight:bold;color:#111">M2</div>
<div class="hl" style="left:1258px;top:733.26px;width:647px"></div>
<div class="hl" style="left:1277.3px;top:726.92px;width:13px;background:#e2e2e2"></div>
<div class="vl" style="left:1277.3px;top:716.90px;height:10.02px;background:#e2e2e2"></div>
<div class="t" style="left:1292px;top:722.18px">Plocha</div>
<div class="t" style="left:1385px;top:722.18px">nestanovena</div>
<div class="vl" style="left:1383px;top:720.0799999999995px;height:13.68px;background:#e0e0e0"></div>
<div class="vl" style="left:1860px;top:720.0799999999995px;height:13.68px;background:#e0e0e0"></div>
<div class="hl" style="left:1258px;top:746.94px;width:647px"></div>
<div class="hl" style="left:1277.3px;top:740.60px;width:13px;background:#e2e2e2"></div>
<div class="vl" style="left:1277.3px;top:716.90px;height:23.70px;background:#e2e2e2"></div>
<div class="t" style="left:1292px;top:735.86px">Způsob stanovení</div>
<div class="t" style="left:1385px;top:735.86px">výpočtem z modelu</div>
<div class="vl" style="left:1383px;top:733.7599999999994px;height:13.68px;background:#e0e0e0"></div>
<div class="vl" style="left:1860px;top:733.7599999999994px;height:13.68px;background:#e0e0e0"></div>
<div class="hl" style="left:1258px;top:760.62px;width:647px"></div>
<div class="ab" style="left:1273.5px;top:750.24px;width:7px;height:7px;border:1px solid #cdcdcd;background:#fff"><div class="ab" style="left:1px;top:2.2px;width:3.5px;height:1px;background:#9a9a9a"></div></div>
<div class="t" style="left:1285px;top:749.54px;font-weight:bold;color:#111">M3</div>
<div class="hl" style="left:1258px;top:774.30px;width:647px"></div>
<div class="hl" style="left:1277.3px;top:767.96px;width:13px;background:#e2e2e2"></div>
<div class="vl" style="left:1277.3px;top:757.94px;height:10.02px;background:#e2e2e2"></div>
<div class="t" style="left:1292px;top:763.22px">Objem</div>
<div class="t" style="left:1385px;top:763.22px">&nbsp;0.011</div>
<div class="vl" style="left:1383px;top:761.1199999999993px;height:13.68px;background:#e0e0e0"></div>
<div class="vl" style="left:1860px;top:761.1199999999993px;height:13.68px;background:#e0e0e0"></div>
<div class="hl" style="left:1258px;top:787.98px;width:647px"></div>
<div class="hl" style="left:1277.3px;top:781.64px;width:13px;background:#e2e2e2"></div>
<div class="vl" style="left:1277.3px;top:757.94px;height:23.70px;background:#e2e2e2"></div>
<div class="t" style="left:1292px;top:776.90px">Způsob stanovení</div>
<div class="t" style="left:1385px;top:776.90px">výpočtem z modelu</div>
<div class="vl" style="left:1383px;top:774.7999999999993px;height:13.68px;background:#e0e0e0"></div>
<div class="vl" style="left:1860px;top:774.7999999999993px;height:13.68px;background:#e0e0e0"></div>
<div class="hl" style="left:1258px;top:801.66px;width:647px"></div>
<div class="ab" style="left:1273.5px;top:791.28px;width:7px;height:7px;border:1px solid #cdcdcd;background:#fff"><div class="ab" style="left:1px;top:2.2px;width:3.5px;height:1px;background:#9a9a9a"></div></div>
<div class="t" style="left:1285px;top:790.58px;font-weight:bold;color:#111">M4</div>
<div class="hl" style="left:1258px;top:815.34px;width:647px"></div>
<div class="hl" style="left:1277.3px;top:809.00px;width:13px;background:#e2e2e2"></div>
<div class="vl" style="left:1277.3px;top:798.98px;height:10.02px;background:#e2e2e2"></div>
<div class="t" style="left:1292px;top:804.26px">Počet</div>
<div class="t" style="left:1385px;top:804.26px">1</div>
<div class="vl" style="left:1383px;top:802.1599999999992px;height:13.68px;background:#e0e0e0"></div>
<div class="vl" style="left:1860px;top:802.1599999999992px;height:13.68px;background:#e0e0e0"></div>
<div class="hl" style="left:1258px;top:829.02px;width:647px"></div>
<div class="hl" style="left:1277.3px;top:822.68px;width:13px;background:#e2e2e2"></div>
<div class="vl" style="left:1277.3px;top:798.98px;height:23.70px;background:#e2e2e2"></div>
<div class="t" style="left:1292px;top:817.94px">Způsob stanovení</div>
<div class="t" style="left:1385px;top:817.94px">výpočtem z modelu</div>
<div class="vl" style="left:1383px;top:815.8399999999991px;height:13.68px;background:#e0e0e0"></div>
<div class="vl" style="left:1860px;top:815.8399999999991px;height:13.68px;background:#e0e0e0"></div>
<div class="hl" style="left:1258px;top:842.70px;width:647px"></div>
<div class="ab" style="left:1273.5px;top:832.32px;width:7px;height:7px;border:1px solid #cdcdcd;background:#fff"><div class="ab" style="left:1px;top:2.2px;width:3.5px;height:1px;background:#9a9a9a"></div></div>
<div class="t" style="left:1285px;top:831.62px;font-weight:bold;color:#111">S1</div>
<div class="hl" style="left:1258px;top:856.38px;width:647px"></div>
<div class="hl" style="left:1277.3px;top:850.04px;width:13px;background:#e2e2e2"></div>
<div class="vl" style="left:1277.3px;top:840.02px;height:10.02px;background:#e2e2e2"></div>
<div class="t" style="left:1292px;top:845.30px">Materiál</div>
<div class="t" style="left:1385px;top:845.30px">Litina</div>
<div class="vl" style="left:1383px;top:843.199999999999px;height:13.68px;background:#e0e0e0"></div>
<div class="vl" style="left:1860px;top:843.199999999999px;height:13.68px;background:#e0e0e0"></div>
<div class="hl" style="left:1258px;top:870.06px;width:647px"></div>
<div class="hl" style="left:1277.3px;top:863.72px;width:13px;background:#e2e2e2"></div>
<div class="vl" style="left:1277.3px;top:840.02px;height:23.70px;background:#e2e2e2"></div>
<div class="t" style="left:1292px;top:858.98px">Podrobná specifikace</div>
<div class="t" style="left:1385px;top:858.98px">neuvedeno</div>
<div class="vl" style="left:1383px;top:856.879999999999px;height:13.68px;background:#e0e0e0"></div>
<div class="vl" style="left:1860px;top:856.879999999999px;height:13.68px;background:#e0e0e0"></div>
<div class="hl" style="left:1258px;top:883.74px;width:647px"></div>
<div class="ab" style="left:1271px;top:870.5599999999989px;width:112px;height:13.68px;background:#d6e2f0"></div>
<div class="ab" style="left:1383px;top:870.5599999999989px;width:522px;height:13.68px;background:#e7f1fb"></div>
<div class="hl" style="left:1277.3px;top:877.40px;width:13px;background:#e2e2e2"></div>
<div class="vl" style="left:1277.3px;top:840.02px;height:37.38px;background:#e2e2e2"></div>
<div class="t" style="left:1292px;top:872.66px">Reference</div>
<div class="t" style="left:1385px;top:872.66px">VL ŘSD</div>
<div class="vl" style="left:1383px;top:870.5599999999989px;height:13.68px;background:#e0e0e0"></div>
<div class="vl" style="left:1860px;top:870.5599999999989px;height:13.68px;background:#e0e0e0"></div>
<div class="hl" style="left:1277.3px;top:891.08px;width:13px;background:#e2e2e2"></div>
<div class="vl" style="left:1277.3px;top:840.02px;height:51.06px;background:#e2e2e2"></div>
<div class="t" style="left:1292px;top:886.34px">Specifikace</div>
<div class="t" style="left:1385px;top:886.34px"></div>
<div class="vl" style="left:1383px;top:884.2399999999989px;height:13.68px;background:#e0e0e0"></div>
<div class="vl" style="left:1860px;top:884.2399999999989px;height:13.68px;background:#e0e0e0"></div>
<div class="ab" style="left:1255px;top:441px;width:1px;height:1px;background:#b0b0b0"></div>
<div class="ab" style="left:1255px;top:444px;width:1px;height:1px;background:#b0b0b0"></div>
<div class="ab" style="left:1255px;top:447px;width:1px;height:1px;background:#b0b0b0"></div>
<div class="ab" style="left:1255px;top:450px;width:1px;height:1px;background:#b0b0b0"></div>
<div class="ab" style="left:1255px;top:453px;width:1px;height:1px;background:#b0b0b0"></div>
<div class="vl" style="left:1271px;top:431px;height:467px;background:#d8d8d8"></div>
</body></html>
